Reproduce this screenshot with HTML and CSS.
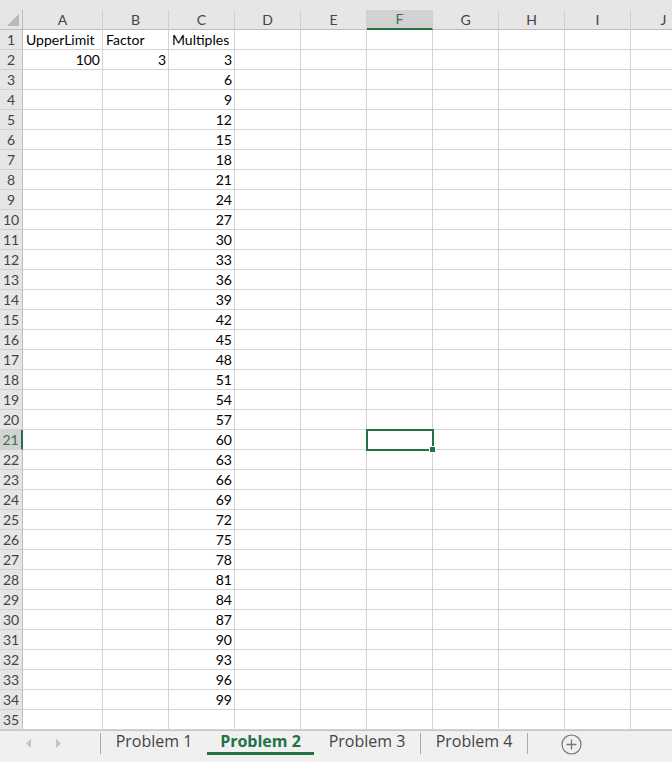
FILE: index.html
```html
<!DOCTYPE html>
<html>
<head>
<meta charset="utf-8">
<link rel="stylesheet" href="styles.css">
</head>
<body>
<div class="app">
  <div class="strip"></div>
  <div class="sheet">
    <div class="corner"><svg width="14" height="14" viewBox="0 0 14 14"><polygon points="13,1 13,13 1,13" fill="#b9b9b9"/></svg></div>
    <div class="ch">A</div><div class="ch">B</div><div class="ch">C</div><div class="ch">D</div><div class="ch">E</div><div class="ch sel">F</div><div class="ch">G</div><div class="ch">H</div><div class="ch">I</div><div class="ch">J</div>

    <div class="rh">1</div><div class="c">UpperLimit</div><div class="c">Factor</div><div class="c">Multiples</div><div class="c"></div><div class="c"></div><div class="c"></div><div class="c"></div><div class="c"></div><div class="c"></div><div class="c"></div>
    <div class="rh">2</div><div class="c n">100</div><div class="c n">3</div><div class="c n">3</div><div class="c"></div><div class="c"></div><div class="c"></div><div class="c"></div><div class="c"></div><div class="c"></div><div class="c"></div>
    <div class="rh">3</div><div class="c"></div><div class="c"></div><div class="c n">6</div><div class="c"></div><div class="c"></div><div class="c"></div><div class="c"></div><div class="c"></div><div class="c"></div><div class="c"></div>
    <div class="rh">4</div><div class="c"></div><div class="c"></div><div class="c n">9</div><div class="c"></div><div class="c"></div><div class="c"></div><div class="c"></div><div class="c"></div><div class="c"></div><div class="c"></div>
    <div class="rh">5</div><div class="c"></div><div class="c"></div><div class="c n">12</div><div class="c"></div><div class="c"></div><div class="c"></div><div class="c"></div><div class="c"></div><div class="c"></div><div class="c"></div>
    <div class="rh">6</div><div class="c"></div><div class="c"></div><div class="c n">15</div><div class="c"></div><div class="c"></div><div class="c"></div><div class="c"></div><div class="c"></div><div class="c"></div><div class="c"></div>
    <div class="rh">7</div><div class="c"></div><div class="c"></div><div class="c n">18</div><div class="c"></div><div class="c"></div><div class="c"></div><div class="c"></div><div class="c"></div><div class="c"></div><div class="c"></div>
    <div class="rh">8</div><div class="c"></div><div class="c"></div><div class="c n">21</div><div class="c"></div><div class="c"></div><div class="c"></div><div class="c"></div><div class="c"></div><div class="c"></div><div class="c"></div>
    <div class="rh">9</div><div class="c"></div><div class="c"></div><div class="c n">24</div><div class="c"></div><div class="c"></div><div class="c"></div><div class="c"></div><div class="c"></div><div class="c"></div><div class="c"></div>
    <div class="rh">10</div><div class="c"></div><div class="c"></div><div class="c n">27</div><div class="c"></div><div class="c"></div><div class="c"></div><div class="c"></div><div class="c"></div><div class="c"></div><div class="c"></div>
    <div class="rh">11</div><div class="c"></div><div class="c"></div><div class="c n">30</div><div class="c"></div><div class="c"></div><div class="c"></div><div class="c"></div><div class="c"></div><div class="c"></div><div class="c"></div>
    <div class="rh">12</div><div class="c"></div><div class="c"></div><div class="c n">33</div><div class="c"></div><div class="c"></div><div class="c"></div><div class="c"></div><div class="c"></div><div class="c"></div><div class="c"></div>
    <div class="rh">13</div><div class="c"></div><div class="c"></div><div class="c n">36</div><div class="c"></div><div class="c"></div><div class="c"></div><div class="c"></div><div class="c"></div><div class="c"></div><div class="c"></div>
    <div class="rh">14</div><div class="c"></div><div class="c"></div><div class="c n">39</div><div class="c"></div><div class="c"></div><div class="c"></div><div class="c"></div><div class="c"></div><div class="c"></div><div class="c"></div>
    <div class="rh">15</div><div class="c"></div><div class="c"></div><div class="c n">42</div><div class="c"></div><div class="c"></div><div class="c"></div><div class="c"></div><div class="c"></div><div class="c"></div><div class="c"></div>
    <div class="rh">16</div><div class="c"></div><div class="c"></div><div class="c n">45</div><div class="c"></div><div class="c"></div><div class="c"></div><div class="c"></div><div class="c"></div><div class="c"></div><div class="c"></div>
    <div class="rh">17</div><div class="c"></div><div class="c"></div><div class="c n">48</div><div class="c"></div><div class="c"></div><div class="c"></div><div class="c"></div><div class="c"></div><div class="c"></div><div class="c"></div>
    <div class="rh">18</div><div class="c"></div><div class="c"></div><div class="c n">51</div><div class="c"></div><div class="c"></div><div class="c"></div><div class="c"></div><div class="c"></div><div class="c"></div><div class="c"></div>
    <div class="rh">19</div><div class="c"></div><div class="c"></div><div class="c n">54</div><div class="c"></div><div class="c"></div><div class="c"></div><div class="c"></div><div class="c"></div><div class="c"></div><div class="c"></div>
    <div class="rh">20</div><div class="c"></div><div class="c"></div><div class="c n">57</div><div class="c"></div><div class="c"></div><div class="c"></div><div class="c"></div><div class="c"></div><div class="c"></div><div class="c"></div>
    <div class="rh sel">21</div><div class="c"></div><div class="c"></div><div class="c n">60</div><div class="c"></div><div class="c"></div><div class="c active"><span class="cursor"><span class="handle"></span></span></div><div class="c"></div><div class="c"></div><div class="c"></div><div class="c"></div>
    <div class="rh">22</div><div class="c"></div><div class="c"></div><div class="c n">63</div><div class="c"></div><div class="c"></div><div class="c"></div><div class="c"></div><div class="c"></div><div class="c"></div><div class="c"></div>
    <div class="rh">23</div><div class="c"></div><div class="c"></div><div class="c n">66</div><div class="c"></div><div class="c"></div><div class="c"></div><div class="c"></div><div class="c"></div><div class="c"></div><div class="c"></div>
    <div class="rh">24</div><div class="c"></div><div class="c"></div><div class="c n">69</div><div class="c"></div><div class="c"></div><div class="c"></div><div class="c"></div><div class="c"></div><div class="c"></div><div class="c"></div>
    <div class="rh">25</div><div class="c"></div><div class="c"></div><div class="c n">72</div><div class="c"></div><div class="c"></div><div class="c"></div><div class="c"></div><div class="c"></div><div class="c"></div><div class="c"></div>
    <div class="rh">26</div><div class="c"></div><div class="c"></div><div class="c n">75</div><div class="c"></div><div class="c"></div><div class="c"></div><div class="c"></div><div class="c"></div><div class="c"></div><div class="c"></div>
    <div class="rh">27</div><div class="c"></div><div class="c"></div><div class="c n">78</div><div class="c"></div><div class="c"></div><div class="c"></div><div class="c"></div><div class="c"></div><div class="c"></div><div class="c"></div>
    <div class="rh">28</div><div class="c"></div><div class="c"></div><div class="c n">81</div><div class="c"></div><div class="c"></div><div class="c"></div><div class="c"></div><div class="c"></div><div class="c"></div><div class="c"></div>
    <div class="rh">29</div><div class="c"></div><div class="c"></div><div class="c n">84</div><div class="c"></div><div class="c"></div><div class="c"></div><div class="c"></div><div class="c"></div><div class="c"></div><div class="c"></div>
    <div class="rh">30</div><div class="c"></div><div class="c"></div><div class="c n">87</div><div class="c"></div><div class="c"></div><div class="c"></div><div class="c"></div><div class="c"></div><div class="c"></div><div class="c"></div>
    <div class="rh">31</div><div class="c"></div><div class="c"></div><div class="c n">90</div><div class="c"></div><div class="c"></div><div class="c"></div><div class="c"></div><div class="c"></div><div class="c"></div><div class="c"></div>
    <div class="rh">32</div><div class="c"></div><div class="c"></div><div class="c n">93</div><div class="c"></div><div class="c"></div><div class="c"></div><div class="c"></div><div class="c"></div><div class="c"></div><div class="c"></div>
    <div class="rh">33</div><div class="c"></div><div class="c"></div><div class="c n">96</div><div class="c"></div><div class="c"></div><div class="c"></div><div class="c"></div><div class="c"></div><div class="c"></div><div class="c"></div>
    <div class="rh">34</div><div class="c"></div><div class="c"></div><div class="c n">99</div><div class="c"></div><div class="c"></div><div class="c"></div><div class="c"></div><div class="c"></div><div class="c"></div><div class="c"></div>
    <div class="rh">35</div><div class="c"></div><div class="c"></div><div class="c"></div><div class="c"></div><div class="c"></div><div class="c"></div><div class="c"></div><div class="c"></div><div class="c"></div><div class="c"></div>
  </div>
  <div class="tabbar">
    <div class="nav">
      <svg class="arrow" width="6" height="9" viewBox="0 0 6 9"><polygon points="5,0 5,9 0,4.5" fill="#c4c4c4"/></svg>
      <svg class="arrow" width="6" height="9" viewBox="0 0 6 9"><polygon points="1,0 1,9 6,4.5" fill="#c4c4c4"/></svg>
    </div>
    <span class="sep"></span>
    <div class="tab">Problem 1</div>
    <div class="tab on">Problem 2</div>
    <div class="tab">Problem 3</div>
    <span class="sep"></span>
    <div class="tab">Problem 4</div>
    <span class="sep"></span>
    <div class="add"><svg width="21" height="21" viewBox="0 0 21 21"><circle cx="10.5" cy="10.5" r="9.5" fill="none" stroke="#777" stroke-width="1.2"/><path d="M10.5 5.5v10M5.5 10.5h10" stroke="#777" stroke-width="1.3"/></svg></div>
  </div>
</div>
</body>
</html>
```

FILE: styles.css
```css
html, body {
  margin: 0;
  padding: 0;
  background: #fff;
}
.app {
  width: 672px;
  height: 762px;
  overflow: hidden;
  display: flex;
  flex-direction: column;
  font-family: Lato, "Open Sans", sans-serif;
}
.strip {
  height: 10px;
  flex: none;
  background: #e6e6e6;
}
.sheet {
  flex: none;
  display: grid;
  grid-template-columns: 23px 80px repeat(9, 66px);
  grid-auto-rows: 20px;
  width: 697px;
}
.corner, .ch, .rh {
  background: #e6e6e6;
  box-sizing: border-box;
  color: #444;
  font-size: 14px;
}
.corner {
  border-right: 1px solid #bdbdbd;
  border-bottom: 1px solid #bdbdbd;
  display: flex;
  align-items: flex-end;
  justify-content: flex-end;
  padding: 0 2px 2px 0;
}
.ch {
  border-right: 1px solid #d0d0d0;
  border-bottom: 1px solid #bdbdbd;
  display: flex;
  align-items: center;
  justify-content: center;
  line-height: 1;
}
.ch.sel {
  background: #d2d2d2;
  color: #3b6f4f;
  border-bottom: 2px solid #217346;
}
.rh {
  border-right: 1px solid #bdbdbd;
  border-bottom: 1px solid #d0d0d0;
  display: flex;
  align-items: center;
  justify-content: center;
  line-height: 1;
}
.rh.sel {
  background: #d2d2d2;
  color: #3b6f4f;
  border-right: 2px solid #217346;
}
.c {
  box-sizing: border-box;
  border-right: 1px solid #d4d4d4;
  border-bottom: 1px solid #d4d4d4;
  font-size: 14px;
  color: #000;
  line-height: 19px;
  padding: 0 3px;
  white-space: nowrap;
  overflow: hidden;
}
.c.n {
  text-align: right;
  padding-right: 2px;
}
.c.active {
  position: relative;
  overflow: visible;
}
.cursor {
  position: absolute;
  left: -1px;
  top: -1px;
  width: 68px;
  height: 22px;
  box-sizing: border-box;
  border: 2px solid #217346;
  z-index: 2;
}
.handle {
  position: absolute;
  right: -4px;
  bottom: -4px;
  width: 5px;
  height: 5px;
  background: #217346;
  border: 1px solid #fff;
}
.tabbar {
  flex: 1;
  display: flex;
  align-items: flex-start;
  background: #f0f0f0;
  border-top: 1px solid #c6c6c6;
  box-sizing: border-box;
  font-family: "Open Sans", "Noto Sans", sans-serif;
}
.nav {
  width: 100px;
  height: 25px;
  display: flex;
  align-items: center;
  gap: 23px;
  padding-left: 26px;
  box-sizing: border-box;
}
.sep {
  width: 1px;
  height: 21px;
  margin-top: 2px;
  background: #a8a8a8;
  flex: none;
}
.tab {
  width: 106px;
  height: 24px;
  box-sizing: border-box;
  text-align: center;
  font-size: 16px;
  line-height: 21px;
  color: #444;
  flex: none;
}
.tab.on {
  width: 107px;
  color: #217346;
  font-weight: bold;
  border-bottom: 3px solid #217346;
}
.add {
  width: 86px;
  display: flex;
  justify-content: center;
  padding-top: 3px;
}
```
